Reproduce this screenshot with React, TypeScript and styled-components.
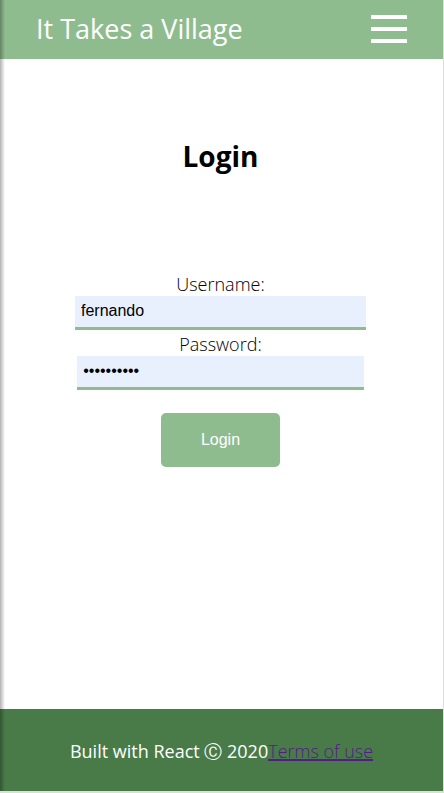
import React, { useState } from "react";
import styled, { createGlobalStyle } from "styled-components";

const GlobalStyle = createGlobalStyle`
  *, *::before, *::after {
    box-sizing: border-box;
  }
  body {
    margin: 0;
    background: #ffffff;
    color: #000000;
    font-family: "Open Sans", "Noto Sans", sans-serif;
  }
`;

const Page = styled.div`
  position: relative;
  display: flex;
  flex-direction: column;
  min-height: 100vh;
  border-right: 1px solid #dddddd;
  border-bottom: 2px solid #dddddd;
`;

const DrawerShadow = styled.div`
  position: absolute;
  inset: 0 auto 0 0;
  width: 5px;
  background: linear-gradient(to right, rgba(0, 0, 0, 0.3), rgba(0, 0, 0, 0));
  pointer-events: none;
`;

const Header = styled.header`
  display: flex;
  align-items: center;
  justify-content: space-between;
  height: 59px;
  padding: 0 36px 2px;
  background: #8fbc8f;
`;

const Brand = styled.span`
  color: #ffffff;
  font-size: 27px;
  line-height: 40px;
  white-space: nowrap;
`;

const MenuButton = styled.button`
  display: flex;
  flex-direction: column;
  justify-content: space-between;
  width: 36px;
  height: 28px;
  padding: 0;
  border: 0;
  background: transparent;
  cursor: pointer;
`;

const MenuBar = styled.span`
  height: 4px;
  background: #ffffff;
`;

const Main = styled.main`
  display: flex;
  flex: 1;
  flex-direction: column;
  align-items: center;
  padding: 77px 2px 0 0;
`;

const Title = styled.h1`
  margin: 0 0 97px;
  font-size: 28px;
  line-height: 40px;
  font-weight: 700;
`;

const Form = styled.form`
  display: flex;
  flex-direction: column;
  align-items: center;
  width: 100%;
`;

const Field = styled.div<{ $width: string }>`
  display: flex;
  flex-direction: column;
  width: ${({ $width }) => $width};
  margin-bottom: 3px;
`;

const Label = styled.label`
  font-size: 18px;
  line-height: 23px;
  font-weight: 300;
  text-align: center;
`;

const Input = styled.input`
  width: 100%;
  height: 34px;
  padding: 0 6px 2px;
  border: 0;
  border-bottom: 3px solid #8fbc8f;
  border-radius: 0;
  outline: 0;
  background: #e8f0fe;
  color: #000000;
  font-family: "Liberation Sans", Arial, sans-serif;
  font-size: 16px;
`;

const SubmitButton = styled.button`
  height: 54px;
  margin-top: 20px;
  padding: 0 40px;
  border: 0;
  border-radius: 5px;
  background: #8fbc8f;
  color: #ffffff;
  font-family: "Liberation Sans", Arial, sans-serif;
  font-size: 16px;
  cursor: pointer;
`;

const Footer = styled.footer`
  display: flex;
  align-items: center;
  justify-content: center;
  height: 82px;
  padding-top: 2px;
  background: #487b48;
  font-size: 18px;
  line-height: 24px;
  white-space: nowrap;
`;

const Credit = styled.span`
  color: #ffffff;
  font-weight: 500;
`;

const TermsLink = styled.a`
  color: #551a8b;
  font-weight: 300;
  text-decoration: underline;
  text-decoration-thickness: 2px;
`;

export default function App() {
  const [username, setUsername] = useState("fernando");
  const [password, setPassword] = useState("villager20");

  return (
    <>
      <GlobalStyle />
      <Page>
        <Header>
          <Brand>It Takes a Village</Brand>
          <MenuButton type="button" aria-label="Menu">
            <MenuBar />
            <MenuBar />
            <MenuBar />
          </MenuButton>
        </Header>
        <Main>
          <Title>Login</Title>
          <Form onSubmit={(event) => event.preventDefault()}>
            <Field $width="66%">
              <Label htmlFor="username">Username:</Label>
              <Input
                id="username"
                type="text"
                value={username}
                onChange={(event) => setUsername(event.target.value)}
              />
            </Field>
            <Field $width="65%">
              <Label htmlFor="password">Password:</Label>
              <Input
                id="password"
                type="password"
                value={password}
                onChange={(event) => setPassword(event.target.value)}
              />
            </Field>
            <SubmitButton type="submit">Login</SubmitButton>
          </Form>
        </Main>
        <Footer>
          <Credit>Built with React Ⓒ 2020</Credit>
          <TermsLink href="#terms">Terms of use</TermsLink>
        </Footer>
        <DrawerShadow />
      </Page>
    </>
  );
}
